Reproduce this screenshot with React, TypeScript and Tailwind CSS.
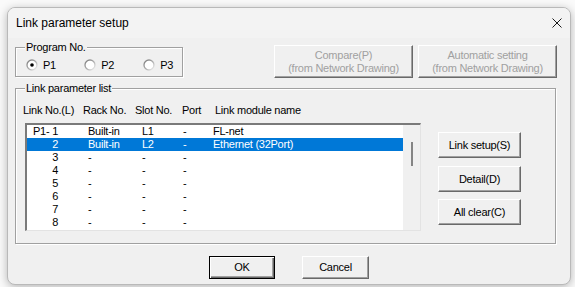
import React from "react";

const font = { fontFamily: '"Liberation Sans", Arial, sans-serif' };

function Radio({ checked, id }: { checked?: boolean; id: string }) {
  return (
    <svg width="12" height="12" viewBox="0 0 12 12" className="shrink-0">
      <defs>
        <linearGradient id={id} x1="0" y1="0" x2="1" y2="1">
          <stop offset="0" stopColor="#7a7a7a" />
          <stop offset="0.55" stopColor="#b0b0b0" />
          <stop offset="1" stopColor="#f4f4f4" />
        </linearGradient>
      </defs>
      <circle cx="6" cy="6" r="5" fill="#fff" stroke={`url(#${id})`} strokeWidth="1.3" />
      {checked && <circle cx="6" cy="6" r="1.8" fill="#000" />}
    </svg>
  );
}

function Btn({
  children,
  className = "",
  disabled,
  def,
}: {
  children: React.ReactNode;
  className?: string;
  disabled?: boolean;
  def?: boolean;
}) {
  const base = def
    ? "border border-black shadow-[inset_1px_1px_0_#fff,inset_-1px_-1px_0_#696969,inset_-2px_-2px_0_#a0a0a0]"
    : "border border-t-white border-l-white border-r-[#696969] border-b-[#696969] shadow-[inset_-1px_-1px_0_#a0a0a0]";
  return (
    <div
      className={`flex flex-col items-center justify-center bg-[#f0f0f0] text-[11px] leading-[13px] tracking-[-0.25px] ${
        disabled ? "text-[#a0a0a0]" : "text-black"
      } ${base} ${className}`}
    >
      {children}
    </div>
  );
}

function Group({
  label,
  className = "",
  children,
}: {
  label: string;
  className?: string;
  children: React.ReactNode;
}) {
  return (
    <div
      className={`relative border border-[#a0a0a0] shadow-[inset_1px_1px_0_#fff,1px_1px_0_#fff] ${className}`}
    >
      <span className="absolute -top-[7px] left-[9px] bg-[#f0f0f0] px-[1px] text-[11px] leading-[13px] tracking-[-0.25px] text-black">
        {label}
      </span>
      {children}
    </div>
  );
}

const rows = [
  { no: "P1- 1", rack: "Built-in", slot: "L1", port: "-", name: "FL-net" },
  { no: "2", rack: "Built-in", slot: "L2", port: "-", name: "Ethernet (32Port)", sel: true },
  { no: "3", rack: "-", slot: "-", port: "-", name: "" },
  { no: "4", rack: "-", slot: "-", port: "-", name: "" },
  { no: "5", rack: "-", slot: "-", port: "-", name: "" },
  { no: "6", rack: "-", slot: "-", port: "-", name: "" },
  { no: "7", rack: "-", slot: "-", port: "-", name: "" },
  { no: "8", rack: "-", slot: "-", port: "-", name: "" },
];

export default function App() {
  return (
    <div className="w-[575px] h-[287px] bg-[#fafafa] pl-[7px] pt-[7px]" style={font}>
      <div className="w-[564px] h-[278px] rounded-[8px] border border-[#b9b9b9] bg-[#f0f0f0] shadow-[0_2px_10px_rgba(0,0,0,0.28)] overflow-hidden flex flex-col">
        {/* Title bar */}
        <div className="h-[30px] shrink-0 flex items-center justify-between pl-[8px] pr-[8px] bg-[#f3f3f3]">
          <span className="text-[12px] text-black">Link parameter setup</span>
          <svg width="10" height="10" viewBox="0 0 10 10">
            <path d="M0.5 0.5 L9.5 9.5 M9.5 0.5 L0.5 9.5" stroke="#1a1a1a" strokeWidth="1" />
          </svg>
        </div>

        {/* Body */}
        <div className="pl-[7px] flex flex-col">
          <div className="h-[42px] flex items-start">
            <Group label="Program No." className="mt-[9px] w-[168px] h-[30px]">
              <div className="flex pl-[10px] pt-[10px]">
                <div className="w-[60px] flex items-center gap-[5px] h-[14px]">
                  <Radio checked id="r1" />
                  <span className="text-[11px] tracking-[-0.25px]">P1</span>
                </div>
                <div className="w-[61px] flex items-center gap-[5px] h-[14px]">
                  <Radio id="r2" />
                  <span className="text-[11px] tracking-[-0.25px]">P2</span>
                </div>
                <div className="w-[40px] flex items-center gap-[5px] h-[14px]">
                  <Radio id="r3" />
                  <span className="text-[11px] tracking-[-0.25px]">P3</span>
                </div>
              </div>
            </Group>
            <Btn disabled className="ml-[91px] mt-[7px] w-[139px] h-[33px]">
              <span>Compare(P)</span>
              <span>(from Network Drawing)</span>
            </Btn>
            <Btn disabled className="ml-[5px] mt-[7px] w-[139px] h-[33px]">
              <span>Automatic setting</span>
              <span>(from Network Drawing)</span>
            </Btn>
          </div>

          <Group label="Link parameter list" className="mt-[8px] w-[541px] h-[156px]">
            <div className="pt-[15px] pl-[7px] flex h-[28px] text-[11px] leading-[13px] tracking-[-0.25px] text-black">
              <span className="w-[60px]">Link No.(L)</span>
              <span className="w-[52px]">Rack No.</span>
              <span className="w-[47px]">Slot No.</span>
              <span className="w-[33px]">Port</span>
              <span>Link module name</span>
            </div>
            <div className="flex mt-[6px] ml-[9px]">
              <div className="w-[396px] h-[108px] bg-white border-t-2 border-l-2 border-t-[#7a7a7a] border-l-[#7a7a7a] border-r border-b border-r-[#e3e3e3] border-b-[#e3e3e3] flex">
                <div className="w-[376px] flex flex-col text-[11px] leading-[13px] tracking-[-0.25px]">
                  {rows.map((r, i) => (
                    <div
                      key={i}
                      className={`h-[13px] flex ${r.sel ? "bg-[#0078d7] text-white" : "text-black"}`}
                    >
                      <span className="w-[31px] text-right whitespace-pre">{r.no}</span>
                      <span className="w-[84px] pl-[30px]">{r.rack}</span>
                      <span className="w-[40px]">{r.slot}</span>
                      <span className="w-[31px] pl-[1px]">{r.port}</span>
                      <span className="whitespace-nowrap">{r.name}</span>
                    </div>
                  ))}
                </div>
                <div className="flex-1 bg-[#f0f0f0]">
                  <div className="mt-[17px] ml-[8px] w-[2px] h-[24px] bg-[#858585]" />
                </div>
              </div>
              <div className="ml-[17px] mt-[9px] flex flex-col">
                <Btn className="w-[83px] h-[26px]">Link setup(S)</Btn>
                <Btn className="mt-[8px] w-[83px] h-[26px]">Detail(D)</Btn>
                <Btn className="mt-[7px] w-[83px] h-[26px]">All clear(C)</Btn>
              </div>
            </div>
          </Group>
        </div>

        {/* Footer */}
        <div className="mt-[12px] flex justify-center gap-[27px]">
          <Btn def className="w-[66px] h-[23px]">OK</Btn>
          <Btn className="w-[67px] h-[23px]">Cancel</Btn>
        </div>
      </div>
    </div>
  );
}
